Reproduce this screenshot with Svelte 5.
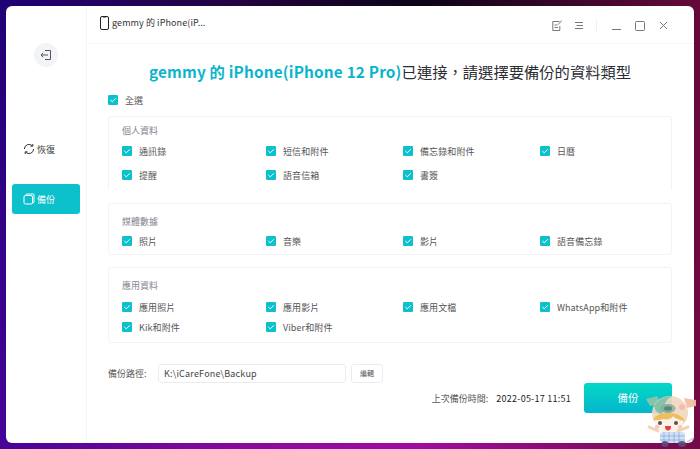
<script>
  const groups = [
    { title: '個人資料', cls: 'g1', items: ['通訊錄', '短信和附件', '備忘錄和附件', '日曆', '提醒', '語音信箱', '書簽'] },
    { title: '媒體數據', cls: 'g2', items: ['照片', '音樂', '影片', '語音備忘錄'] },
    { title: '應用資料', cls: 'g3', items: ['應用照片', '應用影片', '應用文檔', 'WhatsApp和附件', 'Kik和附件', 'Viber和附件'] }
  ];
</script>

{#snippet check()}
  <svg class="cb" viewBox="0 0 10 10" aria-hidden="true">
    <rect width="10" height="10" rx="1.2" fill="#0cc0cc" />
    <path d="M2.4 5 L4.3 6.8 L7.8 3.3" fill="none" stroke="#fff" stroke-width="1" />
  </svg>
{/snippet}

<div class="screen">
  <div class="window">
    <aside class="side">
      <div class="back">
        <svg viewBox="0 0 12 12" width="12" height="12" fill="none" stroke="#555" stroke-width="1">
          <path d="M5 1.5h5.5v9H5M8 6H1M3.2 3.8 1 6l2.2 2.2" />
        </svg>
      </div>
      <div class="nav restore">
        <svg viewBox="0 0 12 12" width="12" height="12" fill="none" stroke="#333" stroke-width="1">
          <path d="M1.4 6a4.6 4.6 0 0 1 7.8-3.3M10.6 6a4.6 4.6 0 0 1-7.8 3.3" />
          <path d="M9.8 1v2.2H7.6M2.2 11V8.8h2.2" />
        </svg>
        <span>恢復</span>
      </div>
      <div class="nav active">
        <svg viewBox="0 0 12 12" width="12" height="12" fill="none" stroke="#fff" stroke-width="1">
          <rect x="1" y="2.5" width="8.5" height="8.5" rx="1.5" />
          <path d="M2.5 2.5 3.5 1h7l.5 1v7l-1.500 1.500" />
        </svg>
        <span>備份</span>
      </div>
    </aside>
    <main class="main">
      <header class="top">
        <div class="device">
          <svg viewBox="0 0 9 14" width="9" height="14" fill="none" stroke="#222" stroke-width="1">
            <rect x=".5" y=".5" width="8" height="13" rx="1.5" />
            <path d="M3 1h3" />
          </svg>
          <span>gemmy 的 iPhone(iP...</span>
        </div>
        <div class="tools">
          <svg viewBox="0 0 11 11" width="11" height="11" fill="none" stroke="#777" stroke-width="1">
            <path d="M7.500 1.500H.8v9h7V6M2.500 5h2.500M2.500 7.500h3.500M5.500 5 9.800.8" />
          </svg>
          <svg class="menu" viewBox="0 0 10 10" width="10" height="10" fill="none" stroke="#777" stroke-width="1">
            <path d="M1 1.500h8M2.500 4.500h6.500M1 7.500h8" />
          </svg>
          <span class="sep"></span>
          <svg class="min" viewBox="0 0 9 9" width="9" height="9" fill="none" stroke="#777" stroke-width="1">
            <path d="M0 8.500h9" />
          </svg>
          <svg class="max" viewBox="0 0 10 10" width="10" height="10" fill="none" stroke="#777" stroke-width="1">
            <rect x=".5" y=".5" width="9" height="9" rx="1" />
          </svg>
          <svg class="close" viewBox="0 0 9 9" width="9" height="9" fill="none" stroke="#777" stroke-width="1">
            <path d="M1 1l7 7M8 1 1 8" />
          </svg>
        </div>
      </header>

      <div class="content">
        <h1><b>gemmy 的 iPhone(iPhone 12 Pro)</b>已連接&#xFF0C;請選擇要備份的資料類型</h1>
        <div class="all">{@render check()}<span>全選</span></div>

        {#each groups as g}
          <section class="group {g.cls}">
            <div class="gtitle">{g.title}</div>
            <div class="items">
              {#each g.items as item}
                <div class="item">{@render check()}<span>{item}</span></div>
              {/each}
            </div>
          </section>
        {/each}

        <div class="path">
          <span class="plabel">備份路徑:</span>
          <div class="input">K:\iCareFone\Backup</div>
          <div class="edit">編輯</div>
        </div>
        <div class="foot">
          <span class="last">上次備份時間:</span>
          <span class="time">2022-05-17 11:51</span>
          <div class="go">備份</div>
        </div>
      </div>
    </main>
  </div>

  <svg class="mascot" viewBox="0 0 60 59" width="60" height="59" aria-hidden="true">
    <path d="M6 9 17 6 21 14 10 16Z" fill="#8fc4a6" />
    <path d="M44 8 56 10 56 16 47 18Z" fill="#f0bfa2" />
    <ellipse cx="30" cy="23" rx="18" ry="17" fill="#f0d8c0" />
    <path d="M14 16Q20 6 32 6 24 10 22 24 16 24 14 16Z" fill="#8fc4a6" />
    <ellipse cx="28" cy="18.500" rx="7.500" ry="4.500" fill="#8fb09c" />
    <ellipse cx="28" cy="18.500" rx="4" ry="2.200" fill="#5f8574" />
    <circle cx="42" cy="17" r="3" fill="#f4b5ae" />
    <path d="M13 30Q16 23 28 23 41 23 45 31 36 29 33 26 30 30 22 29 18 31 13 30Z" fill="#f0b84e" />
    <path d="M15 30Q21 31 23 29 30 31 33 27 37 30 43 31 43 43 29 43 15 43 15 30Z" fill="#fdf0e4" />
    <circle cx="20" cy="33" r="2" fill="#4a4448" />
    <circle cx="36" cy="33" r="2" fill="#4a4448" />
    <circle cx="17" cy="37" r="2.200" fill="#f6c6c0" />
    <circle cx="40" cy="37" r="2.200" fill="#f6c6c0" />
    <path d="M25 36h6q0 4.500-3 4.500T25 36Z" fill="#d8343f" />
    <path d="M18 41 9 37M38 41l10-4" stroke="#f0d0b0" stroke-width="3" stroke-linecap="round" />
    <rect x="20" y="42" width="25" height="11" rx="3" fill="#cfe0f6" />
    <path d="M24 42v11M29 42v11M34 42v11M39 42v11M20 46h25M20 50h25" stroke="#7fa4dc" stroke-width=".8" />
    <ellipse cx="25" cy="54" rx="3.500" ry="3" fill="#5a4a78" />
    <ellipse cx="42" cy="54" rx="4" ry="3" fill="#5a4a78" />
    <path d="M47 52l7-4" stroke="#aaa" stroke-width="1.500" opacity=".6" />
  </svg>
</div>

<style>
  :global(body) { margin: 0; }
  .screen {
    position: relative;
    width: 700px;
    height: 449px;
    box-sizing: border-box;
    padding: 6px;
    overflow: hidden;
    background:
      linear-gradient(90deg, rgba(40, 0, 150, .75) 0%, rgba(90, 0, 150, .3) 35%, rgba(160, 10, 150, 0) 60%, rgba(110, 10, 60, .9) 100%),
      linear-gradient(180deg, #0a0416 0%, #2a0535 25%, #a00ca0 100%);
    font-family: "Noto Sans CJK TC", "Noto Sans", sans-serif;
  }
  .window {
    display: flex;
    height: 437px;
    background: #fff;
    border-radius: 6px;
    overflow: hidden;
  }
  .side {
    width: 80px;
    flex: none;
    display: flex;
    flex-direction: column;
    border-right: 1px solid #f4f4f6;
  }
  .back {
    width: 24px;
    height: 24px;
    margin: 37px 0 0 28px;
    border-radius: 50%;
    background: #f3f4f8;
    display: flex;
    align-items: center;
    justify-content: center;
  }
  .nav {
    display: flex;
    align-items: center;
    gap: 2px;
    width: 68px;
    height: 30px;
    margin-left: 6px;
    padding-left: 11px;
    box-sizing: border-box;
    font-size: 9px;
    color: #444;
    border-radius: 3px;
  }
  .restore { margin-top: 67px; }
  .active { margin-top: 20px; background: #0cc0cc; color: #fff; }
  .main { flex: 1; display: flex; flex-direction: column; min-width: 0; }
  .top {
    height: 38px;
    flex: none;
    box-sizing: border-box;
    display: flex;
    align-items: center;
    justify-content: space-between;
    padding: 0 26px 2px 13px;
    border-bottom: 1px solid #f7f7f9;
  }
  .device { display: flex; align-items: center; gap: 3px; font-size: 9px; color: #333; letter-spacing: .1px; margin-top: -2px; }
  .tools { display: flex; align-items: center; margin-top: 4px; }
  .menu { margin-left: 11px; }
  .sep { width: 1px; height: 11px; background: #e3f4f6; margin-left: 12px; }
  .min { margin-left: 15px; }
  .max { margin-left: 14px; }
  .close { margin-left: 14px; }
  .content { flex: 1; padding: 0 22px 0 21px; }
  h1 {
    margin: 14px 0 0;
    height: 26px;
    line-height: 26px;
    font-size: 15.3px;
    font-weight: 400;
    color: #2c2c33;
    text-align: center;
    white-space: nowrap;
  }
  h1 b { color: #0ab4cc; font-weight: 700; letter-spacing: .2px; }
  .all { display: flex; align-items: center; gap: 7px; height: 12px; margin-top: 10px; font-size: 9px; color: #555; }
  .cb { width: 10px; height: 10px; flex: none; }
  .group {
    box-sizing: border-box;
    border: 1px solid #f3f3f5;
    border-radius: 3px;
    padding: 0 13px;
    margin-bottom: 12px;
  }
  .g1 { margin-top: 10px; height: 75px; padding-top: 7px; border-bottom-color: transparent; }
  .g2 { height: 52px; padding-top: 11px; }
  .g3 { height: 76px; padding-top: 11px; }
  .gtitle { font-size: 9px; line-height: 13px; color: #85858f; }
  .items { display: grid; grid-template-columns: 144px 137px 137px 1fr; row-gap: 8px; }
  .g1 .items { margin-top: 6px; }
  .g2 .items { margin-top: 5px; }
  .g3 .items { margin-top: 9px; }
  .item { display: flex; align-items: center; gap: 7px; height: 16px; font-size: 9px; color: #555; white-space: nowrap; letter-spacing: .1px; }
  .g3 .item { height: 12px; }
  .path { display: flex; align-items: center; margin-top: 21px; font-size: 9px; height: 19px; }
  .plabel { width: 50px; color: #555; }
  .input {
    width: 188px; height: 19px; box-sizing: border-box;
    border: 1px solid #ececf0; border-radius: 3px;
    padding-left: 5px; line-height: 17px; color: #444; letter-spacing: .2px;
  }
  .edit {
    width: 32px; height: 19px; box-sizing: border-box; margin-left: 5px;
    border: 1px solid #ececf0; border-radius: 3px;
    text-align: center; line-height: 17px; font-size: 7px; color: #555;
  }
  .foot { display: flex; align-items: center; justify-content: flex-end; height: 30px; font-size: 9px; color: #555; }
  .time { color: #222; margin-left: 8px; letter-spacing: .25px; }
  .go {
    width: 88px; height: 30px; margin-left: 13px;
    border-radius: 3px;
    background: linear-gradient(180deg, #04d8c6, #05b6cc);
    color: #fff; font-size: 10.5px; line-height: 30px; text-align: center;
  }
  .mascot { position: absolute; right: 0; bottom: 0; opacity: .92; }
</style>
